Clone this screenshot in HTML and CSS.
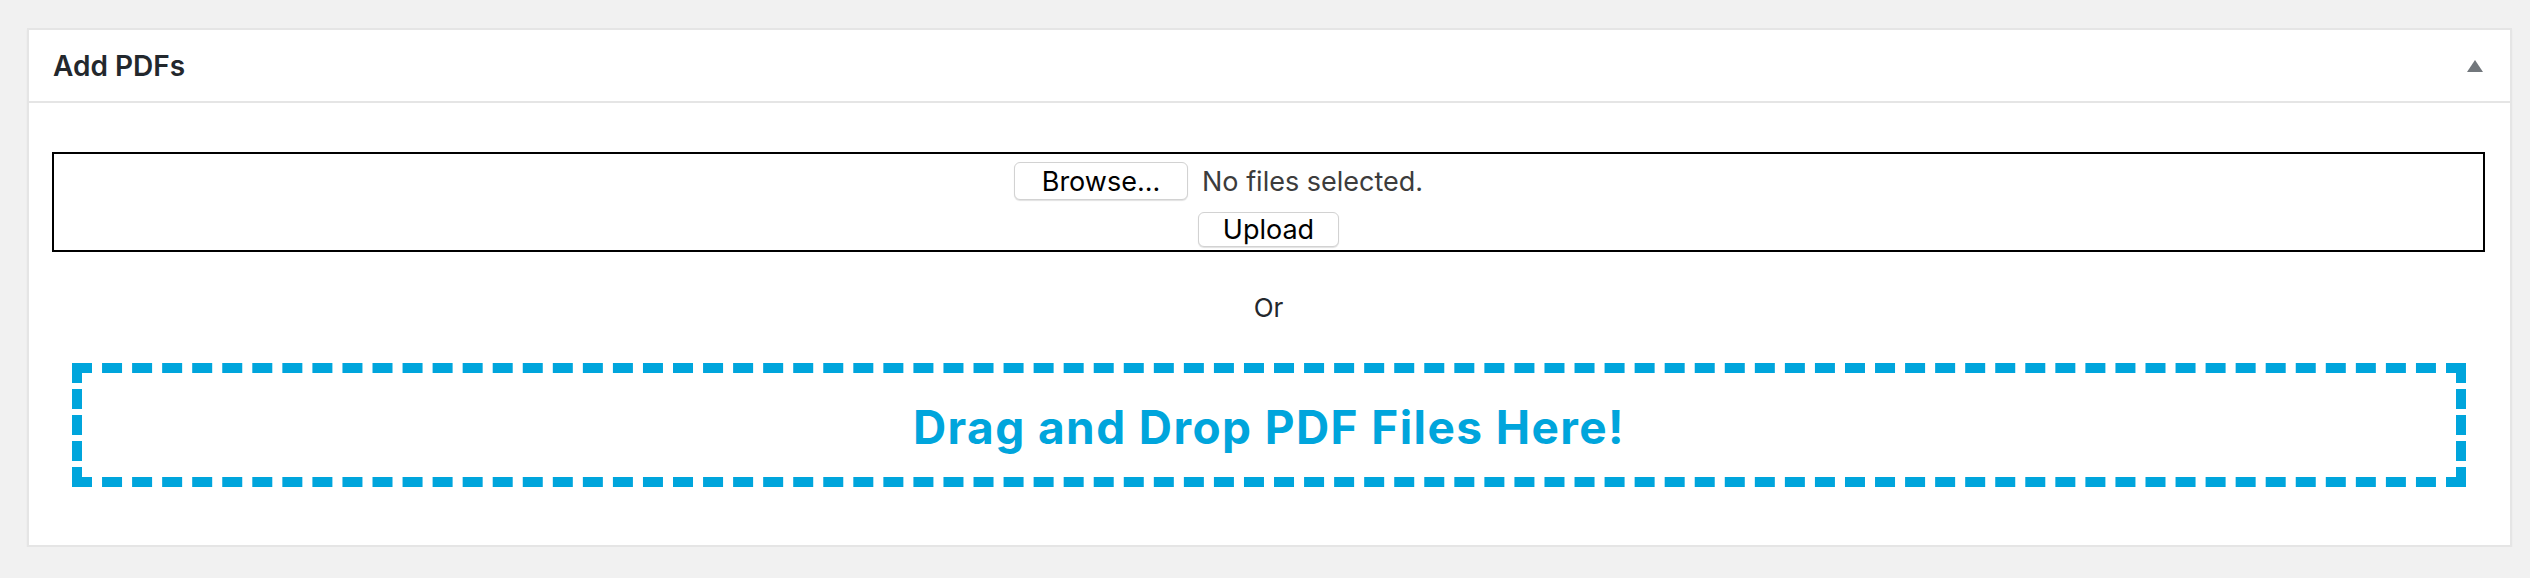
FILE: index.html
```html
<!DOCTYPE html>
<html lang="en">
<head>
<meta charset="UTF-8">
<meta name="viewport" content="width=device-width, initial-scale=1.0">
<title>Add PDFs</title>
<link rel="stylesheet" href="styles.css">
</head>
<body>
  <div class="wrap">
    <div class="postbox">
      <div class="postbox-header">
        <h2>Add PDFs</h2>
        <span class="toggle"></span>
      </div>
      <div class="inside">
        <form class="upload-form">
          <span class="file-input">
            <button type="button" class="btn btn-browse">Browse...</button>
            <span class="file-name">No files selected.</span>
          </span>
          <button type="button" class="btn btn-upload">Upload</button>
        </form>
        <p class="or">Or</p>
        <div class="dropzone">Drag and Drop PDF Files Here!</div>
      </div>
    </div>
  </div>
</body>
</html>
```

FILE: styles.css
```css
body {
  margin: 0;
  background: #f1f1f1;
  font-family: Inter, "Liberation Sans", sans-serif;
  color: #23282d;
}
.wrap {
  padding: 28px 18px 0 27px;
}
.postbox {
  background: #fff;
  border: 2px solid #e5e5e5;
  box-shadow: 0 2px 2px rgba(0, 0, 0, 0.04);
}
.postbox-header {
  display: flex;
  align-items: center;
  justify-content: space-between;
  height: 71px;
  padding: 0 27px 0 24px;
  border-bottom: 2px solid #e5e5e5;
}
.postbox-header h2 {
  margin: 0;
  font-size: 28px;
  font-weight: 600;
  color: #23282d;
}
.toggle {
  width: 0;
  height: 0;
  border-left: 8px solid transparent;
  border-right: 8px solid transparent;
  border-bottom: 12px solid #72777c;
}
.inside {
  padding: 49px 25px 58px 23px;
}
.upload-form {
  display: flex;
  flex-direction: column;
  align-items: center;
  gap: 12px;
  padding: 8px 0 3px;
  border: 2px solid #000;
}
.file-input {
  display: flex;
  align-items: center;
  width: 509px;
  gap: 14px;
}
.btn {
  font-family: Inter, "Liberation Sans", sans-serif;
  font-size: 27px;
  color: #000;
  background: #fff;
  border: 1px solid #d2d2d2;
  border-radius: 6px;
  box-shadow: 0 1px 1px rgba(0, 0, 0, 0.12);
  padding: 0;
  cursor: pointer;
}
.btn-browse {
  width: 174px;
  height: 38px;
}
.btn-upload {
  width: 141px;
  height: 35px;
}
.file-name {
  font-size: 27px;
  color: #3c3c3c;
}
.or {
  margin: 38px 0 37px;
  text-align: center;
  font-size: 26px;
  line-height: 36px;
  color: #23282d;
}
.dropzone {
  display: flex;
  align-items: center;
  justify-content: center;
  height: 100px;
  margin: 0 19px 0 20px;
  padding-top: 4px;
  box-sizing: content-box;
  border: 10px dashed #00a5dc;
  color: #00a5dc;
  font-size: 46px;
  font-weight: 700;
  letter-spacing: 1.4px;
}
```
